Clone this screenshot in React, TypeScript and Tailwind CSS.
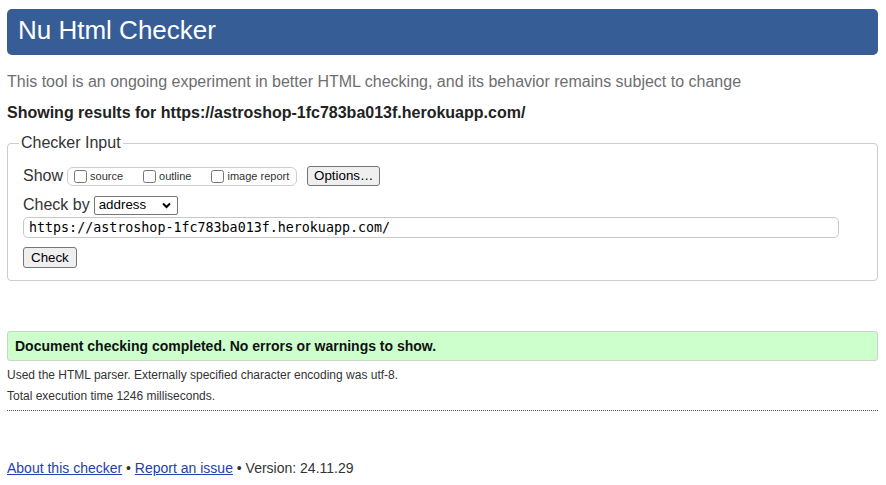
import React from "react";

const labelCls = "ml-[3px] text-[11px] leading-[13px] text-[#333]";

const Checkbox: React.FC<{ label: string; last?: boolean }> = ({ label, last }) => (
  <label className={`flex items-end ${last ? "" : "mr-[20px]"}`}>
    <input type="checkbox" className="m-0 h-[13px] w-[13px]" />
    <span className={labelCls}>{label}</span>
  </label>
);

const App: React.FC = () => {
  return (
    <div className="h-[485px] w-[886px] overflow-hidden bg-white pl-[7px] pr-[8px] pt-[9px] font-['Liberation_Sans',Arial,sans-serif] text-[#222]">
      <header className="h-[46px] rounded-[5px] bg-[#365d95] pl-[11px] text-[26px] leading-[43px] text-white">
        Nu Html Checker
      </header>

      <p className="mt-[17px] text-[16px] leading-[20px] text-[#6e6e6e]">
        This tool is an ongoing experiment in better HTML checking, and its behavior remains subject to change
      </p>
      <p className="mt-[11px] text-[16px] font-bold leading-[20px] text-[#222]">
        Showing results for https://astroshop-1fc783ba013f.herokuapp.com/
      </p>

      <fieldset className="mt-[8px] rounded-[4px] border border-[#ccc] pb-[12px] pl-[15px] pr-[14px]">
        <legend className="ml-[-4px] px-[2px] text-[16px] leading-[24px] text-[#333]">Checker Input</legend>

        <div className="mt-[11px] flex h-[20px] items-center">
          <span className="text-[16px] leading-[20px] text-[#333]">Show</span>
          <div className="ml-[4px] flex h-[19px] w-[230px] items-center rounded-[6px] border border-[#ccc] pl-[6px]">
            <Checkbox label="source" />
            <Checkbox label="outline" />
            <Checkbox label="image report" last />
          </div>
          <button className="ml-[10px] h-[20px] rounded-[3px] border border-[#767676] bg-[#efefef] px-[6px] text-[13.33px] leading-[16px] text-black">
            Options…
          </button>
        </div>

        <div className="mt-[9px] flex h-[20px] items-center">
          <span className="text-[16px] leading-[20px] text-[#333]">Check by</span>
          <div className="ml-[4px] flex h-[19px] w-[84px] items-center justify-between rounded-[2px] border border-[#767676] bg-white pl-[4px] pr-[4px]">
            <span className="text-[13.33px] leading-[16px] text-black">address</span>
            <svg width="9" height="7" viewBox="0 0 9 7" className="mr-[2px]">
              <path d="M1 1.5 L4.5 5 L8 1.5" fill="none" stroke="#000" strokeWidth="2" />
            </svg>
          </div>
        </div>

        <div className="mt-[2px] flex h-[21px] w-[816px] items-center rounded-[5px] border border-[#c8c8c8] pl-[5px]">
          <span className="font-['DejaVu_Sans_Mono',monospace] text-[13.33px] leading-[16px] text-black">
            https://astroshop-1fc783ba013f.herokuapp.com/
          </span>
        </div>

        <button className="mt-[9px] block h-[21px] rounded-[3px] border border-[#767676] bg-[#efefef] px-[7px] text-[13.33px] leading-[16px] text-black">
          Check
        </button>
      </fieldset>

      <div className="mt-[50px] h-[30px] rounded-[3px] border border-[#c4d8c4] bg-[#ccffcc] pl-[7px] text-[14px] font-bold leading-[28px] text-[#111]">
        Document checking completed. No errors or warnings to show.
      </div>

      <p className="mt-[6px] text-[12px] leading-[16px] text-[#333]">
        Used the HTML parser. Externally specified character encoding was utf-8.
      </p>
      <p className="mt-[5px] text-[12px] leading-[16px] text-[#333]">Total execution time 1246 milliseconds.</p>
      <div className="mt-[6px] border-t border-dotted border-[#555]" />

      <p className="mt-[49px] text-[14px] leading-[16px] text-[#333]">
        <a href="#" className="text-[#2340b0] underline">About this checker</a>
        {" • "}
        <a href="#" className="text-[#2340b0] underline">Report an issue</a>
        {" • Version: 24.11.29"}
      </p>
    </div>
  );
};

export default App;
